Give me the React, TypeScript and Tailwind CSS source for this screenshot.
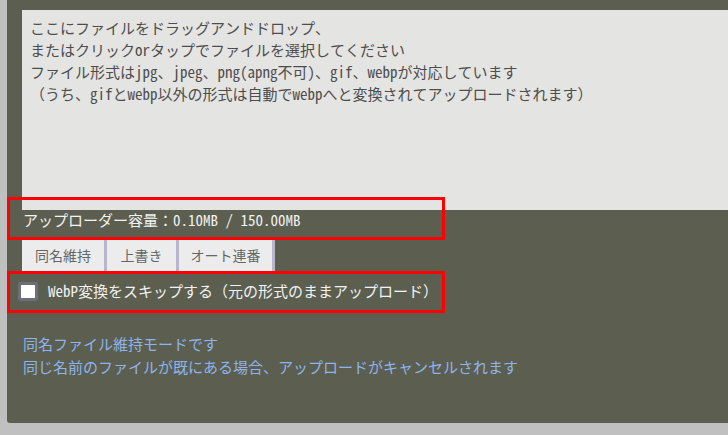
export default function App() {
  const mono = { fontFamily: '"Noto Sans Mono CJK JP", "Noto Sans CJK JP", monospace' };
  return (
    <div className="w-[728px] h-[435px] bg-[#c0c0c0] pl-[7px] pb-[12px] overflow-hidden">
      <div className="relative h-full bg-[#5c5f50] rounded-bl-[3px] pt-[10px] pl-[15px]">
        {/* drop zone */}
        <div
          className="h-[200px] bg-[#e4e4e2] pl-[8px] pt-[7px] text-[15px] leading-[22px] text-[#4d4d4d]"
          style={mono}
        >
          <p>ここにファイルをドラッグアンドドロップ、</p>
          <p>またはクリックorタップでファイルを選択してください</p>
          <p>ファイル形式はjpg、jpeg、png(apng不可)、gif、webpが対応しています</p>
          <p>（うち、gifとwebp以外の形式は自動でwebpへと変換されてアップロードされます）</p>
        </div>

        <p className="pl-[1px] text-[15px] leading-[20px] text-[#f2f2f2]" style={mono}>
          アップローダー容量：0.10MB / 150.00MB
        </p>

        {/* mode tabs */}
        <div
          className="flex mt-[9px] h-[32px] text-[14px] text-[#666]"
          style={{ fontFamily: '"Noto Sans CJK JP", sans-serif' }}
        >
          {[
            { label: '同名維持', w: 'w-[85px]' },
            { label: '上書き', w: 'w-[72px]' },
            { label: 'オート連番', w: 'w-[96px]' },
          ].map(b => (
            <button
              key={b.label}
              className={`${b.w} h-full bg-[#ececec] border-r-[3px] border-[#b9b5cc] flex items-center justify-center`}
            >
              {b.label}
            </button>
          ))}
        </div>

        {/* webp skip */}
        <label className="flex items-center h-[20px] mt-[10px] -ml-[4px]">
          <span className="w-[20px] h-[19px] bg-white border-[3px] border-[#6b6f7d] rounded-[2px] shrink-0" />
          <span className="ml-[10px] text-[15px] text-[#f2f2f2]" style={mono}>
            WebP変換をスキップする（元の形式のままアップロード）
          </span>
        </label>

        <div
          className="mt-[31px] pl-[1px] text-[15px] leading-[23px] text-[#8db4ee]"
          style={{ fontFamily: '"Noto Sans CJK JP", sans-serif' }}
        >
          <p>同名ファイル維持モードです</p>
          <p>同じ名前のファイルが既にある場合、アップロードがキャンセルされます</p>
        </div>

        {/* annotation boxes */}
        <div className="absolute left-0 top-[197px] w-[438px] h-[43px] border-[3px] border-[#ff0000]" />
        <div className="absolute left-0 top-[271px] w-[438px] h-[42px] border-[3px] border-[#ff0000]" />
      </div>
    </div>
  );
}
